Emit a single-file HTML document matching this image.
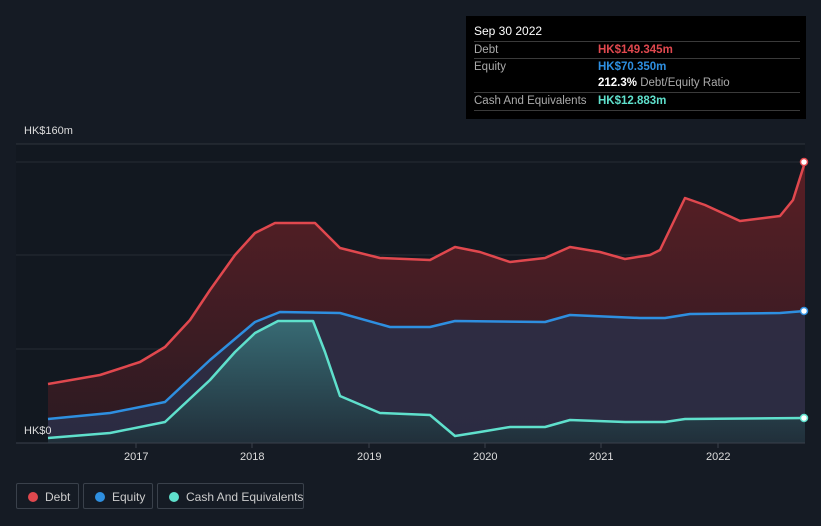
<!DOCTYPE html>
<html><head><meta charset="utf-8"><style>
body{margin:0;background:#151b24;width:821px;height:526px;overflow:hidden;font-family:"Liberation Sans",sans-serif;position:relative}
.tt{position:absolute;left:466px;top:16px;width:340px;height:103px;background:#000;color:#fff;font-size:11.5px}
.tt .r{position:absolute;left:8px;right:6px;border-top:1px solid #3a3a3a;height:17px;line-height:17px;color:#aaa;white-space:nowrap}
.tt .v{position:absolute;left:124px}
.lg{position:absolute;top:483px;height:26px;border:1px solid #3a414b;border-radius:2px;color:#ccc;font-size:12px;line-height:26px;box-sizing:border-box;white-space:nowrap}
.lg i{position:absolute;left:11px;top:8px;width:10px;height:10px;border-radius:50%}
.lg span{position:absolute;left:28px}
.ax{position:absolute;color:#ddd;font-size:11px}
</style></head><body>
<svg width="821" height="526" style="position:absolute;left:0;top:0">
<defs>
<linearGradient id="gd" x1="0" y1="0" x2="0" y2="1"><stop offset="0" stop-color="#5a1f25"/><stop offset="1" stop-color="#2a1a22"/></linearGradient>
<linearGradient id="gc" x1="0" y1="0" x2="0" y2="1"><stop offset="0" stop-color="#3a7a80"/><stop offset="1" stop-color="#1e3038"/></linearGradient>
</defs>
<rect x="16" y="144" width="789" height="299" fill="#121820"/>
<line x1="16" y1="144" x2="805" y2="144" stroke="#2e343d"/>
<line x1="16" y1="162" x2="805" y2="162" stroke="#262c35"/>
<line x1="16" y1="255" x2="805" y2="255" stroke="#262c35"/>
<line x1="16" y1="349" x2="805" y2="349" stroke="#262c35"/>
<polygon fill="url(#gd)" points="48,384 100,375 140,362 165,347 190,320 210,290 235,255 255,233 275,223 315,223 340,248 380,258 430,260 455,247 480,252 510,262 545,258 570,247 600,252 625,259 650,255 660,250 685,198 705,205 740,221 780,216 793,200 805,162 805,443 48,443"/>
<polygon fill="#2c2f48" opacity="0.85" points="48,419 110,413 165,402 210,360 255,322 280,312 340,313 390,327 430,327 455,321 545,322 570,315 640,318 665,318 690,314 780,313 805,311 805,443 48,443"/>
<polygon fill="url(#gc)" opacity="0.8" points="48,438 110,433 165,422 210,380 235,352 255,333 278,321 313,321 325,352 340,396 380,413 430,415 455,436 480,432 510,427 545,427 570,420 625,422 665,422 685,419 805,418 805,443 48,443"/>
<g fill="none" stroke-width="2.5" stroke-linejoin="round">
<polyline stroke="#e0484e" points="48,384 100,375 140,362 165,347 190,320 210,290 235,255 255,233 275,223 315,223 340,248 380,258 430,260 455,247 480,252 510,262 545,258 570,247 600,252 625,259 650,255 660,250 685,198 705,205 740,221 780,216 793,200 805,162"/>
<polyline stroke="#2e8fe0" points="48,419 110,413 165,402 210,360 255,322 280,312 340,313 390,327 430,327 455,321 545,322 570,315 640,318 665,318 690,314 780,313 805,311"/>
<polyline stroke="#5fe0cc" points="48,438 110,433 165,422 210,380 235,352 255,333 278,321 313,321 325,352 340,396 380,413 430,415 455,436 480,432 510,427 545,427 570,420 625,422 665,422 685,419 805,418"/>
</g>
<circle cx="804" cy="162" r="3.5" fill="#fff" stroke="#e0484e" stroke-width="1.5"/>
<circle cx="804" cy="311" r="3.5" fill="#fff" stroke="#2e8fe0" stroke-width="1.5"/>
<circle cx="804" cy="418" r="3.5" fill="#fff" stroke="#5fe0cc" stroke-width="1.5"/>
<line x1="16" y1="443" x2="805" y2="443" stroke="#3a414b"/>
<g stroke="#3a414b"><line x1="136" y1="443" x2="136" y2="448"/><line x1="252" y1="443" x2="252" y2="448"/><line x1="369" y1="443" x2="369" y2="448"/><line x1="485" y1="443" x2="485" y2="448"/><line x1="601" y1="443" x2="601" y2="448"/><line x1="718" y1="443" x2="718" y2="448"/></g>
</svg>
<div class="ax" style="left:24px;top:125px">HK$160m</div>
<div class="ax" style="left:24px;top:425px">HK$0</div>
<div class="ax" style="left:124px;top:451px">2017</div>
<div class="ax" style="left:240px;top:451px">2018</div>
<div class="ax" style="left:357px;top:451px">2019</div>
<div class="ax" style="left:473px;top:451px">2020</div>
<div class="ax" style="left:589px;top:451px">2021</div>
<div class="ax" style="left:706px;top:451px">2022</div>
<div class="tt">
<div style="position:absolute;left:8px;top:8px;font-size:12px">Sep 30 2022</div>
<div class="r" style="top:25px">Debt<span class="v" style="color:#e0484e;font-weight:bold">HK$149.345m</span></div>
<div class="r" style="top:42px">Equity<span class="v" style="color:#2e8fe0;font-weight:bold">HK$70.350m</span></div>
<div class="r" style="top:59px;border-top:none"><span class="v"><b style="color:#fff">212.3%</b> Debt/Equity Ratio</span></div>
<div class="r" style="top:76px">Cash And Equivalents<span class="v" style="color:#5fe0cc;font-weight:bold">HK$12.883m</span></div>
<div class="r" style="top:94px;height:0"></div>
</div>
<div class="lg" style="left:16px;width:63px"><i style="background:#e0484e"></i><span>Debt</span></div>
<div class="lg" style="left:83px;width:70px"><i style="background:#2e8fe0"></i><span>Equity</span></div>
<div class="lg" style="left:157px;width:147px"><i style="background:#5fe0cc"></i><span>Cash And Equivalents</span></div>
</body></html>
